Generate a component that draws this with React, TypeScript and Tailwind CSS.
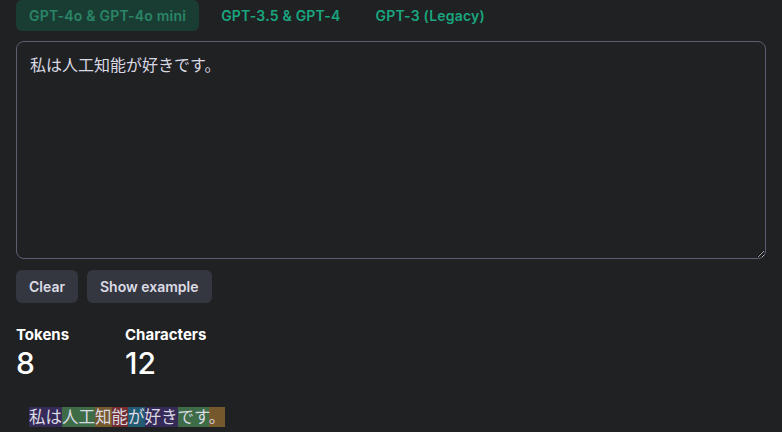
import React, { useState } from 'react';

const tabs = ['GPT-4o & GPT-4o mini', 'GPT-3.5 & GPT-4', 'GPT-3 (Legacy)'];

const tokenColors = [
  'bg-[rgba(107,64,216,0.3)]',
  'bg-[rgba(104,222,122,0.4)]',
  'bg-[rgba(244,172,54,0.4)]',
  'bg-[rgba(239,65,70,0.4)]',
  'bg-[rgba(39,181,234,0.4)]',
];

const tokens = ['私は', '人工', '知', '能', 'が', '好き', 'です', '。'];

const App: React.FC = () => {
  const [text, setText] = useState('私は人工知能が好きです。');
  const [active, setActive] = useState(0);

  return (
    <div
      className="min-h-screen bg-[#202123] px-4 text-[#ececf1]"
      style={{ fontFamily: 'Inter, "Noto Sans CJK JP", sans-serif' }}
    >
      <div className="flex h-[31px] items-stretch gap-[9px]">
        {tabs.map((tab, i) => (
          <button
            key={tab}
            onClick={() => setActive(i)}
            className={`rounded-md px-[13px] text-[14px] font-semibold tracking-[0.015em] ${
              i === active ? 'bg-[#1a3d33] text-[#2a8567]' : 'text-[#19a67f]'
            }`}
          >
            {tab}
          </button>
        ))}
      </div>

      <textarea
        value={text}
        onChange={(e) => setText(e.target.value)}
        className="mt-[10px] block h-[218px] w-full resize-y rounded-lg border border-[#5f5d72] bg-[#202123] px-[13px] py-[11px] text-[16px] leading-6 text-[#d9d9e3] outline-none"
      />

      <div className="mt-[11px] flex gap-[9px]">
        <button className="h-[33px] rounded-md bg-[#353740] px-[13px] text-[14px] font-semibold text-[#dcdce6]">
          Clear
        </button>
        <button className="h-[33px] rounded-md bg-[#353740] px-[13px] text-[14px] font-semibold text-[#dcdce6]">
          Show example
        </button>
      </div>

      <div className="mt-[22px] flex">
        <div className="w-[109px]">
          <div className="text-[15px] font-bold leading-5 text-white">Tokens</div>
          <div className="text-[30px] font-medium leading-9 text-white">8</div>
        </div>
        <div>
          <div className="text-[15px] font-bold leading-5 text-white">Characters</div>
          <div className="text-[30px] font-medium leading-9 text-white">12</div>
        </div>
      </div>

      <div className="mt-[27px] pl-[13px] text-[16.5px] leading-[19px] text-[#d9d9e3]">
        {tokens.map((t, i) => (
          <span key={i} className={tokenColors[i % tokenColors.length]}>
            {t}
          </span>
        ))}
      </div>
    </div>
  );
};

export default App;
